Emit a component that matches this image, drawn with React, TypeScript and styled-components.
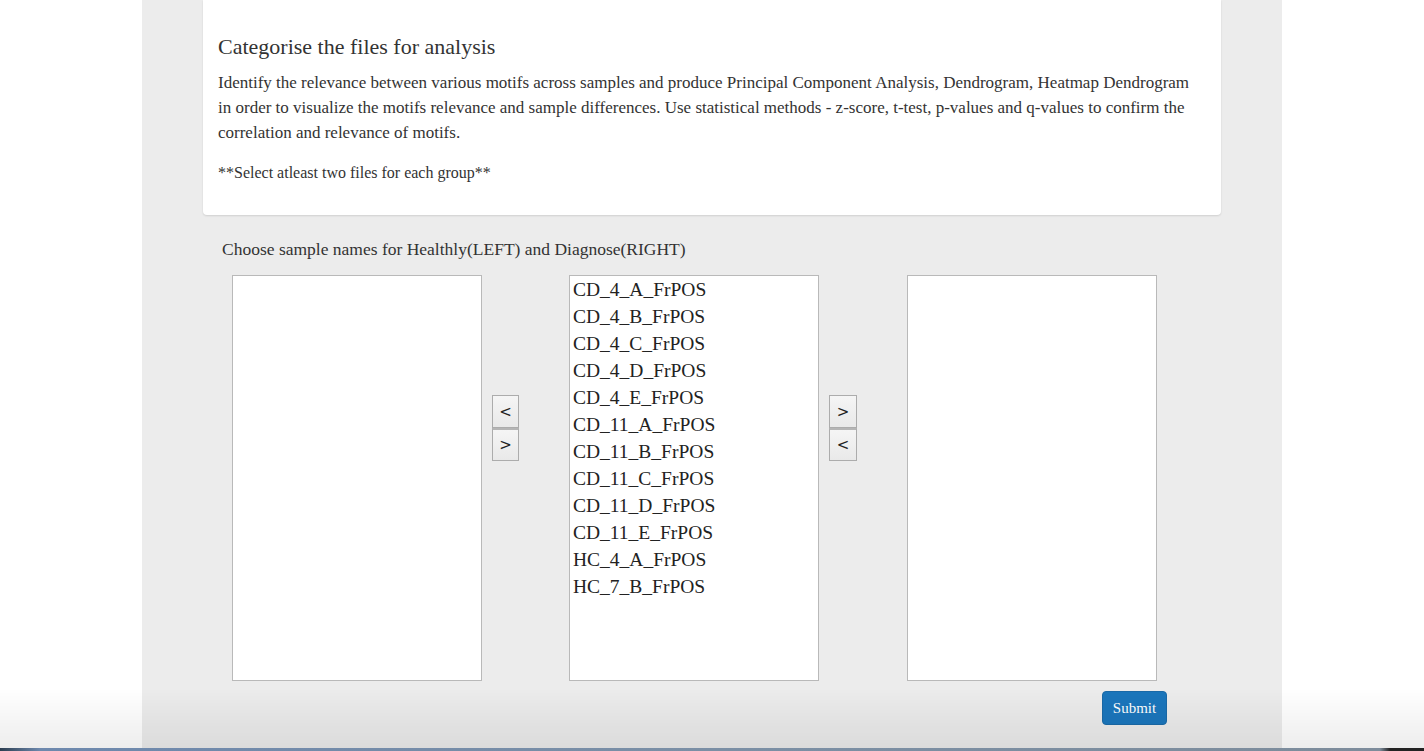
import React from "react";
import styled, { createGlobalStyle } from "styled-components";

const Global = createGlobalStyle`
  html, body { margin: 0; padding: 0; background: #ffffff; }
  body { font-family: "Liberation Serif", "Times New Roman", serif; color: #333333; }
  * { box-sizing: border-box; }
`;

const Page = styled.div`
  width: 1140px;
  margin: 0 auto;
  background: #ececec;
  min-height: 751px;
  padding: 0 61px;
`;

const Card = styled.section`
  background: #ffffff;
  border-radius: 0 0 4px 4px;
  box-shadow: 0 1px 2px rgba(0, 0, 0, 0.12);
  padding: 30px 15px 30px 15px;
`;

const Title = styled.h3`
  margin: 0 0 6px 0;
  font-size: 22px;
  font-weight: normal;
  line-height: 34px;
  color: #333;
`;

const Para = styled.p<{ $size?: number; $last?: boolean }>`
  margin: 0 0 ${(p) => (p.$last ? 0 : 15)}px 0;
  font-size: ${(p) => p.$size ?? 17}px;
  line-height: 25px;
`;

const Section = styled.div`
  padding: 21px 0 0 19px;
`;

const Prompt = styled.p`
  margin: 0 0 13px 0;
  font-size: 17.5px;
  line-height: 26px;
`;

const Row = styled.div`
  display: flex;
  align-items: flex-start;
  padding-left: 10px;
`;

const ListBox = styled.div`
  width: 250px;
  height: 406px;
  background: #ffffff;
  border: 1px solid #b9b9b9;
  padding: 0 3px;
  overflow: hidden;
`;

const Item = styled.div`
  font-size: 19.5px;
  line-height: 27px;
  color: #222;
  white-space: nowrap;
`;

const Arrows = styled.div<{ $w: number }>`
  display: flex;
  flex-direction: column;
  width: ${(p) => p.$w}px;
  margin: 120px 50px 0 10px;
`;

const ArrowBtn = styled.button`
  height: 33px;
  width: 100%;
  padding: 0;
  border: 1px solid #acacac;
  background: linear-gradient(#f5f5f5, #e9e9e9);
  font-family: "DejaVu Sans", sans-serif;
  font-size: 15px;
  color: #222;
  & + & { border-top-width: 2px; border-top-color: #b5b5b5; }
`;

const Footer = styled.div`
  display: flex;
  justify-content: flex-end;
  width: 945px;
  padding-top: 10px;
`;

const Submit = styled.button`
  width: 65px;
  height: 34px;
  border: 1px solid #1a6aa8;
  border-radius: 4px;
  background: #1b76bc;
  color: #ffffff;
  font-family: "Liberation Serif", serif;
  font-size: 15px;
`;

const Shade = styled.div`
  position: fixed;
  left: 0;
  right: 0;
  bottom: 3px;
  height: 60px;
  pointer-events: none;
  background: linear-gradient(rgba(0, 0, 0, 0), rgba(0, 0, 0, 0.07));
`;

const Dock = styled.div`
  position: fixed;
  left: 0;
  right: 0;
  bottom: 0;
  height: 3px;
  background: linear-gradient(90deg, #2c3e50 0, #6d88ad 40px, #7b8fa5 50%, #7d8c9b 1380px, #222 1390px);
`;

const files = [
  "CD_4_A_FrPOS",
  "CD_4_B_FrPOS",
  "CD_4_C_FrPOS",
  "CD_4_D_FrPOS",
  "CD_4_E_FrPOS",
  "CD_11_A_FrPOS",
  "CD_11_B_FrPOS",
  "CD_11_C_FrPOS",
  "CD_11_D_FrPOS",
  "CD_11_E_FrPOS",
  "HC_4_A_FrPOS",
  "HC_7_B_FrPOS",
];

export default function App() {
  return (
    <>
      <Global />
      <Page>
        <Card>
          <Title>Categorise the files for analysis</Title>
          <Para>
            Identify the relevance between various motifs across samples and produce Principal Component Analysis,
            Dendrogram, Heatmap Dendrogram in order to visualize the motifs relevance and sample differences. Use
            statistical methods - z-score, t-test, p-values and q-values to confirm the correlation and relevance of
            motifs.
          </Para>
          <Para $size={16} $last>**Select atleast two files for each group**</Para>
        </Card>
        <Section>
          <Prompt>Choose sample names for Healthly(LEFT) and Diagnose(RIGHT)</Prompt>
          <Row>
            <ListBox />
            <Arrows $w={27}>
              <ArrowBtn>&lt;</ArrowBtn>
              <ArrowBtn>&gt;</ArrowBtn>
            </Arrows>
            <ListBox>
              {files.map((f) => (
                <Item key={f}>{f}</Item>
              ))}
            </ListBox>
            <Arrows $w={28}>
              <ArrowBtn>&gt;</ArrowBtn>
              <ArrowBtn>&lt;</ArrowBtn>
            </Arrows>
            <ListBox />
          </Row>
          <Footer>
            <Submit>Submit</Submit>
          </Footer>
        </Section>
      </Page>
      <Shade />
      <Dock />
    </>
  );
}
